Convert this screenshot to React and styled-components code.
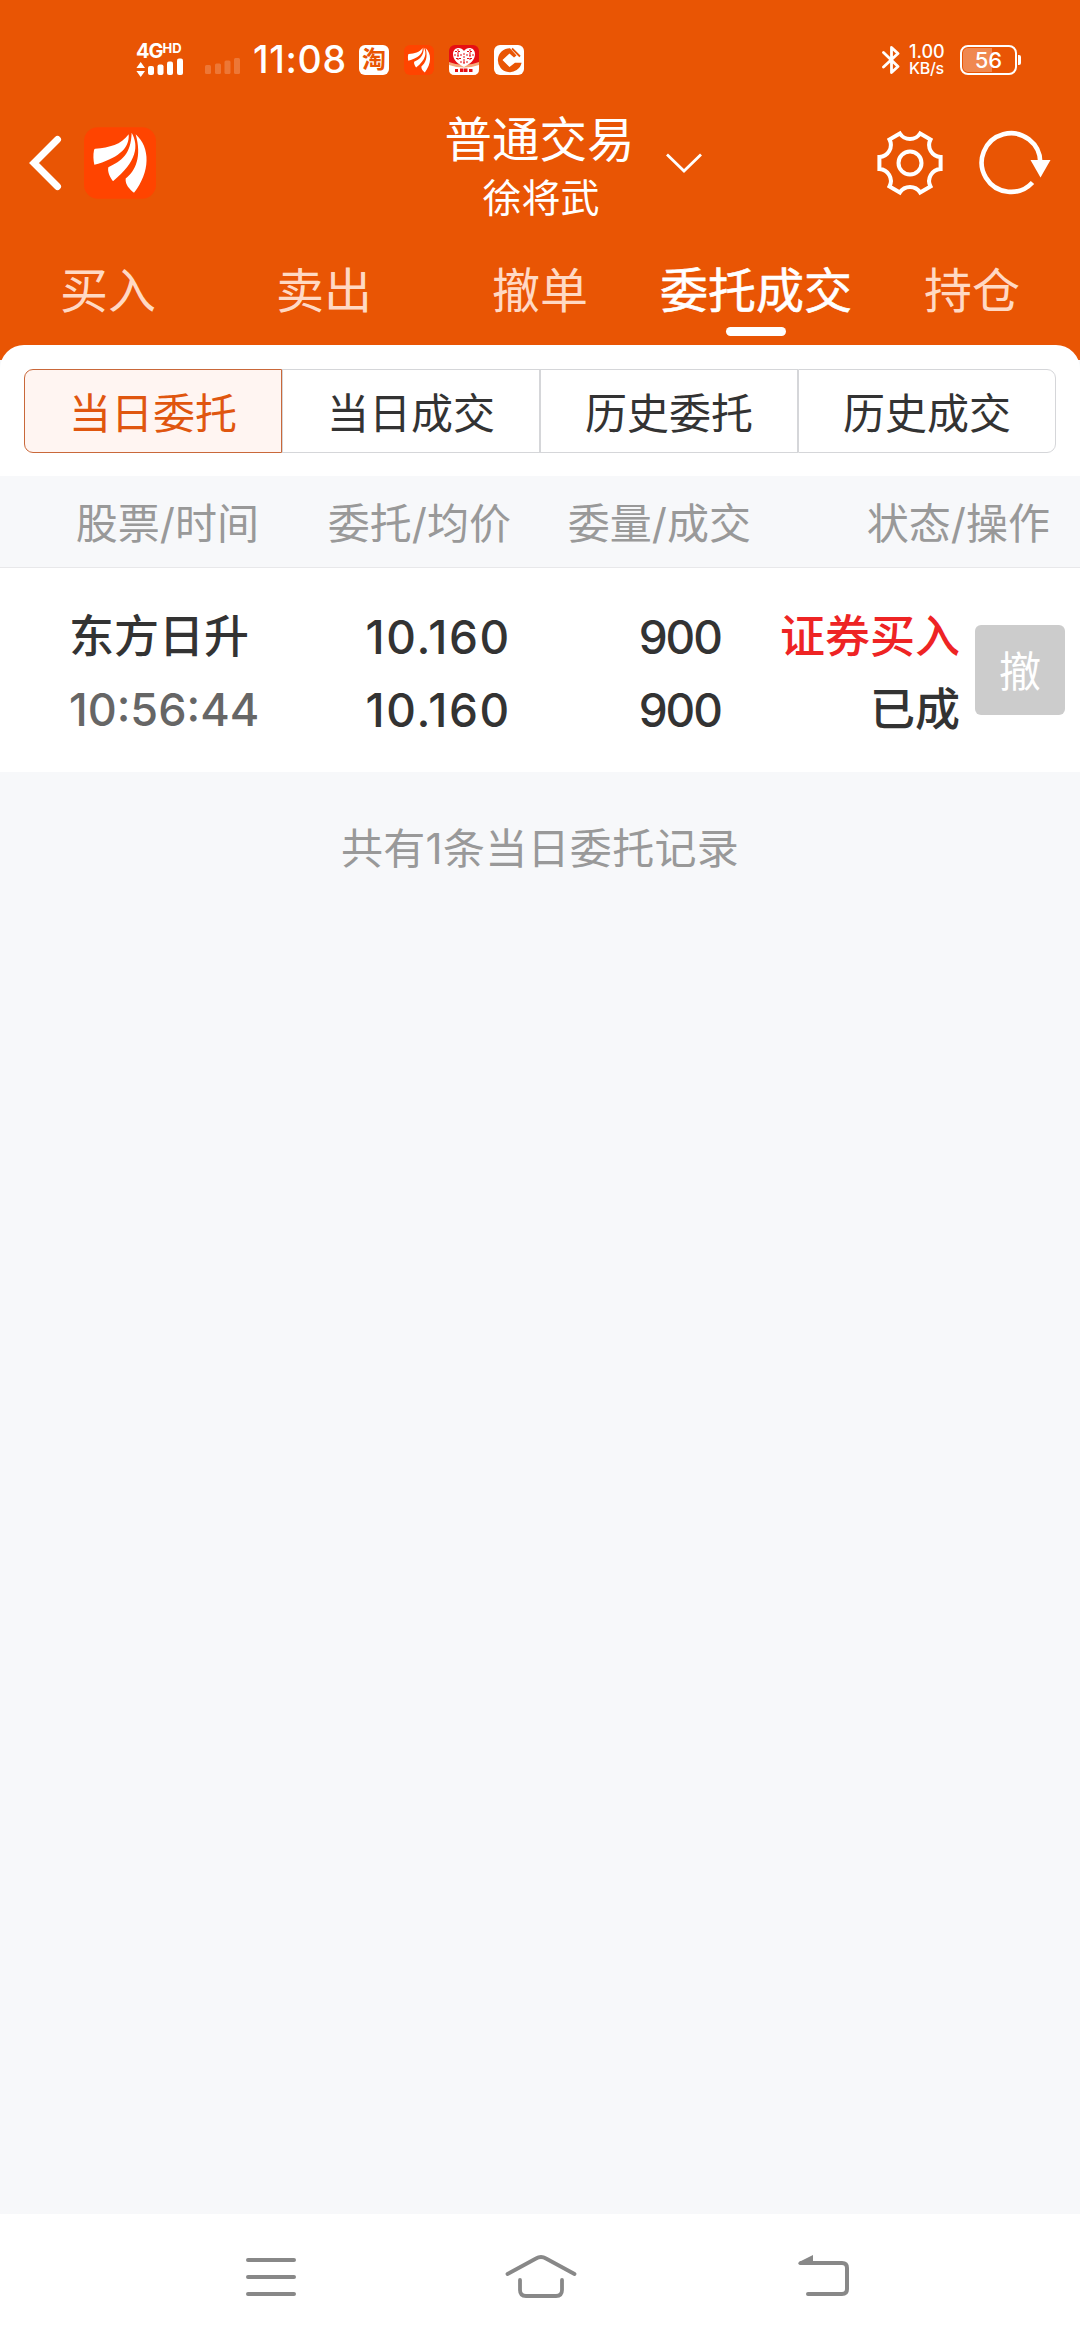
import React, { useState } from "react";

import styled, { createGlobalStyle } from "styled-components";

const tabs = ["买入", "卖出", "撤单", "委托成交", "持仓"];
const filters = ["当日委托", "当日成交", "历史委托", "历史成交"];
const columns = ["股票/时间", "委托/均价", "委量/成交", "状态/操作"];

const orders = [
  {
    id: 1,
    name: "东方日升",
    time: "10:56:44",
    price: "10.160",
    average: "10.160",
    amount: "900",
    filled: "900",
    side: "证券买入",
    status: "已成",
  },
];

const toothAngles = [0, 60, 120, 180, 240, 300];

// six flat teeth joined by concave arcs
const gearPath =
  toothAngles
    .map((deg, i) => {
      const a = (deg * Math.PI) / 180;
      const turn = (x, y) =>
        `${(x * Math.cos(a) - y * Math.sin(a)).toFixed(2)} ${(
          x * Math.sin(a) +
          y * Math.cos(a)
        ).toFixed(2)}`;
      return `${i === 0 ? "M" : "A12 12 0 0 0 "}${turn(30.6, -6)}L${turn(
        30.6,
        6
      )}`;
    })
    .join("") + "A12 12 0 0 0 30.6 -6Z";

function BrandLogo({ size, radius }) {
  return (
    <svg width={size} height={size} viewBox="253 84 216 215">
      <rect x="253" y="84" width="216" height="215" rx={radius} fill="#ff4400" />
      <g fill="#fff">
        <path d="M287 149C330 144 364 137 387 105C391 150 350 178 284 197C281 182 280 167 283 153Q284 149 287 149Z" />
        <path d="M396 101C418 140 412 188 340 246C330 232 323 217 326 204C366 186 394 165 396 101Z" />
        <path d="M408 105C453 145 452 218 403 281C390 270 376 257 378 238C408 214 427 172 408 105Z" />
      </g>
    </svg>
  );
}

function SignalIcon() {
  return (
    <svg width="48" height="20" viewBox="136 57 48 20" fill="#fff">
      <path d="M140.7 61l4.3 6h-8.6zM140.7 76l4.3-6h-8.6z" />
      <rect x="148" y="65" width="6" height="9" rx="2" />
      <rect x="157.5" y="63.5" width="6" height="10.5" rx="2" />
      <rect x="167" y="60.5" width="6" height="13.5" rx="2" />
      <rect x="177" y="57.5" width="6" height="16.5" rx="2" />
    </svg>
  );
}

function EmptySignalIcon() {
  return (
    <svg width="36" height="20" viewBox="205 57 36 20" fill="#fff" opacity="0.2">
      <rect x="205" y="65" width="6" height="9" rx="1.5" />
      <rect x="215" y="63.5" width="6" height="10.5" rx="1.5" />
      <rect x="224.5" y="60.5" width="6" height="13.5" rx="1.5" />
      <rect x="234" y="58" width="6" height="16" rx="1.5" />
    </svg>
  );
}

function HeartAppIcon() {
  return (
    <svg width="30" height="30" viewBox="0 0 30 30">
      <rect width="30" height="30" rx="6" fill="#e60f14" />
      <path d="M0 17Q15 23 30 17V24Q30 30 24 30H6Q0 30 0 24Z" fill="#f6a878" />
      <path d="M0 20Q15 25 30 20V24Q30 30 24 30H6Q0 30 0 24Z" fill="#fff" />
      <path
        d="M15 22C9 19 4 15 4 9C4 2 12 1 15 6C18 1 26 2 26 9C26 15 21 19 15 22Z"
        fill="#fff"
      />
      <path
        d="M6 6.500h6M18 6.500h6M5 10h8M17 10h8M7 13.500h5M18 13.500h5M9 4v12M21 4v12M15 8v12M11 17h8"
        stroke="#e60f14"
        strokeWidth="1"
        strokeDasharray="2 1"
        fill="none"
      />
      <path d="M6 24h3v3H6zM11 23.500h3.500v3.500h-3.500zM15 23.500h3.500v3.500H15zM20 24h3.500v3H20z" fill="#e60f14" />
    </svg>
  );
}

function BankAppIcon() {
  return (
    <svg width="30" height="30" viewBox="0 0 30 30">
      <rect width="30" height="30" rx="6" fill="#fff" />
      <path
        d="M16 3.200A12 12 0 1 0 27.600 17.800H21L15.500 22L8.500 15L15.500 8.500L20 12.500L22.500 10.500Z"
        fill="#e95504"
      />
      <path d="M15.500 9.200l6 5.800-6 6-6-6z" fill="#fff" />
      <path d="M18 3.500l8 8" stroke="#e95504" strokeWidth="1.800" />
    </svg>
  );
}

function BluetoothIcon() {
  return (
    <svg width="18" height="30" viewBox="0 0 18 30">
      <path
        d="M1.500 7.500L16 21.500L9.500 27.500V2.500L16 8.500L1.500 22"
        fill="none"
        stroke="#fff"
        strokeWidth="2.800"
        strokeLinejoin="round"
        strokeLinecap="round"
      />
    </svg>
  );
}

function Homepage() {
  const [tab, setTab] = useState("委托成交");
  const [filter, setFilter] = useState("当日委托");

  return (
    <Page>
      <GlobalStyle />
      <Header>
        <StatusBar>
          <Carrier>
            <Network>
              4G<small>HD</small>
            </Network>
            <SignalIcon />
          </Carrier>
          <EmptySignal>
            <EmptySignalIcon />
          </EmptySignal>
          <Clock>11:08</Clock>
          <Notifications>
            <ShopIcon>淘</ShopIcon>
            <BrandLogo size={30} radius={44} />
            <HeartAppIcon />
            <BankAppIcon />
          </Notifications>
          <BluetoothIcon />
          <Speed>
            <span>1.00</span>
            <span>KB/s</span>
          </Speed>
          <Battery>56</Battery>
          <BatteryTip />
        </StatusBar>

        <TitleBar>
          <TitleSide>
            <svg width="34" height="56" viewBox="29 135 34 56">
              <path
                d="M57.500 139.500L34 163L57.500 186.500"
                fill="none"
                stroke="#fff"
                strokeWidth="7"
                strokeLinecap="round"
              />
            </svg>
            <BrandLogo size={72} radius={42} />
          </TitleSide>
          <TitleText>
            <Title>普通交易</Title>
            <Account>徐将武</Account>
          </TitleText>
          <TitleActions>
            <svg width="38" height="22" viewBox="0 0 38 22">
              <path
                d="M2 2.500L19 19L36 2.500"
                fill="none"
                stroke="#fff"
                strokeWidth="2.800"
              />
            </svg>
            <Tools>
              <svg width="68" height="68" viewBox="-34 -34 68 68">
                <g fill="none" stroke="#fff" strokeWidth="4">
                  <path d={gearPath} />
                  <circle r="11.500" />
                </g>
              </svg>
              <svg width="74" height="68" viewBox="978 129 74 68">
                <path
                  d="M1032.500 182.500A29.300 29.300 0 1 1 1040.300 163"
                  fill="none"
                  stroke="#fff"
                  strokeWidth="4.600"
                />
                <path d="M1030.500 160H1050.500L1040.500 177.500Z" fill="#fff" />
              </svg>
            </Tools>
          </TitleActions>
        </TitleBar>

        <TabList>
          {tabs.map((name) => (
            <Tab key={name} $active={name === tab} onClick={() => setTab(name)}>
              {name}
            </Tab>
          ))}
        </TabList>
      </Header>

      <Panel>
        <FilterGroup>
          {filters.map((name) => (
            <Filter
              key={name}
              $active={name === filter}
              onClick={() => setFilter(name)}
            >
              {name}
            </Filter>
          ))}
        </FilterGroup>
      </Panel>

      <TableHead>
        {columns.map((name) => (
          <span key={name}>{name}</span>
        ))}
      </TableHead>
      {orders.map((order) => (
        <Order key={order.id}>
          <Cell $align="left">
            <Value>{order.name}</Value>
            <Value $color="#666">{order.time}</Value>
          </Cell>
          <NumberCell $spacing="1.7px">
            <Value>{order.price}</Value>
            <Value>{order.average}</Value>
          </NumberCell>
          <NumberCell $spacing="-2px">
            <Value>{order.amount}</Value>
            <Value>{order.filled}</Value>
          </NumberCell>
          <Cell>
            <Value $color="#ee2424">{order.side}</Value>
            <Value>{order.status}</Value>
          </Cell>
          <CancelButton>撤</CancelButton>
        </Order>
      ))}
      <Summary>共有{orders.length}条当日委托记录</Summary>

      <SystemNav>
        <svg width="50" height="44" viewBox="246 2255 50 44">
          <path
            d="M248 2260H294M248 2277H294M248 2294H294"
            stroke="#888"
            strokeWidth="4"
            strokeLinecap="round"
          />
        </svg>
        <svg width="72" height="44" viewBox="505 2255 72 44">
          <g fill="none" stroke="#888" strokeWidth="3.800" strokeLinecap="round">
            <path d="M507.500 2274L536 2258.500Q541 2255.500 546 2258.500L574.500 2274" />
            <path d="M520 2280V2290Q520 2296 526 2296H556Q562 2296 562 2290V2280" />
          </g>
        </svg>
        <svg width="52" height="44" viewBox="798 2255 52 44">
          <path
            d="M801 2263H842Q847 2263 847 2268V2289Q847 2294 842 2294H808"
            fill="none"
            stroke="#888"
            strokeWidth="4"
            strokeLinecap="round"
          />
          <path d="M813 2255V2265H800Q797 2264 799 2262Z" fill="#888" />
        </svg>
      </SystemNav>
    </Page>
  );
}

const GlobalStyle = createGlobalStyle`
  body {
    margin: 0;
    background: #f7f8fa;
  }

  * {
    box-sizing: border-box;
  }

  svg {
    display: block;
    flex: none;
  }

  button {
    padding: 0;
    border: none;
    background: none;
    font: inherit;
    cursor: pointer;
  }
`;

const Page = styled.div`
  display: flex;
  flex-direction: column;
  width: 1080px;
  height: 2340px;
  background: #f7f8fa;
  color: #333;
  font-family: Inter, "Noto Sans CJK SC", sans-serif;
`;

const Header = styled.header`
  height: 360px;
  flex: none;
  background: #e95504;
  color: #fff;
`;

const StatusBar = styled.div`
  display: flex;
  align-items: center;
  height: 105px;
  padding: 15px 59px 0 136px;
`;

const Carrier = styled.div`
  display: flex;
  flex-direction: column;
  width: 48px;
`;

const Network = styled.div`
  display: flex;
  height: 15px;
  font-size: 20px;
  line-height: 16px;
  font-weight: 700;
  letter-spacing: -1px;

  small {
    font-size: 13px;
    line-height: 11px;
    letter-spacing: 0;
  }
`;

const EmptySignal = styled.div`
  margin: 14px 0 0 21px;
`;

const Clock = styled.span`
  width: 105px;
  padding-left: 12px;
  font-size: 37.5px;
  font-weight: 500;
  line-height: 42px;
  letter-spacing: 0.7px;
`;

const Notifications = styled.div`
  display: flex;
  gap: 15px;
  margin: 0 auto 0 13px;
`;

const ShopIcon = styled.span`
  width: 30px;
  height: 30px;
  border-radius: 6px;
  background: #fff;
  color: #e95504;
  font-size: 24px;
  font-weight: 700;
  line-height: 29px;
  text-align: center;
`;

const Speed = styled.div`
  display: flex;
  flex-direction: column;
  width: 37px;
  margin: 0 14px 0 9px;
  font-size: 18px;
  font-weight: 500;
  line-height: 16px;

  span + span {
    font-size: 16px;
    letter-spacing: -0.3px;
  }
`;

const Battery = styled.div`
  width: 57px;
  height: 30px;
  padding: 1px;
  border: 2.5px solid #fff;
  border-radius: 8px;
  background: linear-gradient(
      90deg,
      rgba(255, 255, 255, 0.3) 56%,
      transparent 56%
    )
    content-box;
  font-size: 22px;
  font-weight: 500;
  line-height: 25px;
  text-align: center;
`;

const BatteryTip = styled.i`
  width: 3px;
  height: 10px;
  margin-left: 1px;
  border-radius: 0 2px 2px 0;
  background: #fff;
`;

const TitleBar = styled.div`
  display: grid;
  grid-template-columns: 400px 279px 1fr;
  align-items: center;
  height: 116px;
`;

const TitleSide = styled.div`
  display: flex;
  align-items: center;
  gap: 21px;
  padding-left: 29px;
`;

const TitleText = styled.div`
  display: flex;
  flex-direction: column;
  align-items: center;
  gap: 12px;
  padding-top: 11px;
`;

const Title = styled.h1`
  margin: 0;
  font-size: 47.500px;
  font-weight: 400;
  line-height: 46px;
`;

const Account = styled.span`
  padding-left: 3px;
  font-size: 39px;
  line-height: 46px;
`;

const TitleActions = styled.div`
  display: flex;
  align-items: center;
  justify-content: space-between;
  padding: 0 28px 0 0;
  margin-left: -14px;
`;

const Tools = styled.div`
  display: flex;
  gap: 34px;
`;

const TabList = styled.nav`
  display: grid;
  grid-template-columns: repeat(5, 1fr);
  padding-top: 37px;
`;

const Tab = styled.button`
  display: flex;
  flex-direction: column;
  align-items: center;
  color: ${(props) => (props.$active ? "#fff" : "#ffd9c4")};
  font-size: 48px;
  line-height: 66px;
  -webkit-text-stroke: ${(props) => (props.$active ? "0.6px" : "0")};

  &::after {
    content: "";
    width: 60px;
    height: 9px;
    margin-top: 3px;
    border-radius: 5px;
    background: ${(props) => (props.$active ? "#fff" : "transparent")};
  }
`;

const Panel = styled.section`
  flex: none;
  height: 131px;
  margin-top: -15px;
  padding: 24px 24px 0;
  border-radius: 24px 24px 0 0;
  background: #fff;
`;

const FilterGroup = styled.div`
  display: grid;
  grid-template-columns: repeat(4, 1fr);
  height: 84px;
`;

const Filter = styled.button`
  padding-bottom: 2px;
  border: 1px solid ${(props) => (props.$active ? "#c9683a" : "#d5d6d9")};
  background: ${(props) => (props.$active ? "#fff5f2" : "#fff")};
  color: ${(props) => (props.$active ? "#e0560f" : "#333")};
  font-size: 42px;

  &:first-child {
    border-radius: 9px 0 0 9px;
  }

  &:last-child {
    border-radius: 0 9px 9px 0;
  }
`;

const TableHead = styled.div`
  display: grid;
  grid-template-columns: 259px 252px 240px 299px;
  flex: none;
  height: 92px;
  padding-top: 5px;
  border-bottom: 1px solid #e8e8ea;
  color: #999;
  font-size: 42px;
  line-height: 86px;
  text-align: right;
`;

const Order = styled.article`
  display: grid;
  grid-template-columns: 189px 252px 210px 240px 90px;
  align-items: center;
  flex: none;
  height: 204px;
  padding-left: 69px;
  background: #fff;
`;

const Value = styled.span`
  color: ${(props) => props.$color || "#333"};
  font-size: 45px;
  font-weight: 500;
  line-height: 60px;
  white-space: nowrap;
`;

const Cell = styled.div`
  display: flex;
  flex-direction: column;
  gap: 13px;
  padding-top: 6px;
  text-align: ${(props) => props.$align || "right"};
`;

const NumberCell = styled(Cell)`
  margin-right: -1px;
  letter-spacing: ${(props) => props.$spacing};

  ${Value} {
    font-size: 46px;
  }
`;

const CancelButton = styled.button`
  width: 90px;
  height: 90px;
  margin-left: 15px;
  padding-bottom: 3px;
  border-radius: 6px;
  background: #ccc;
  color: #fff;
  font-size: 42px;
`;

const Summary = styled.p`
  margin: 45px 0 0;
  color: #999;
  font-size: 42px;
  line-height: 64px;
  letter-spacing: 0.3px;
  text-align: center;
`;

const SystemNav = styled.footer`
  display: grid;
  grid-template-columns: 259px 293px 52px;
  align-items: center;
  height: 126px;
  margin-top: auto;
  padding-left: 246px;
  background: #fff;
`;

export default Homepage;
